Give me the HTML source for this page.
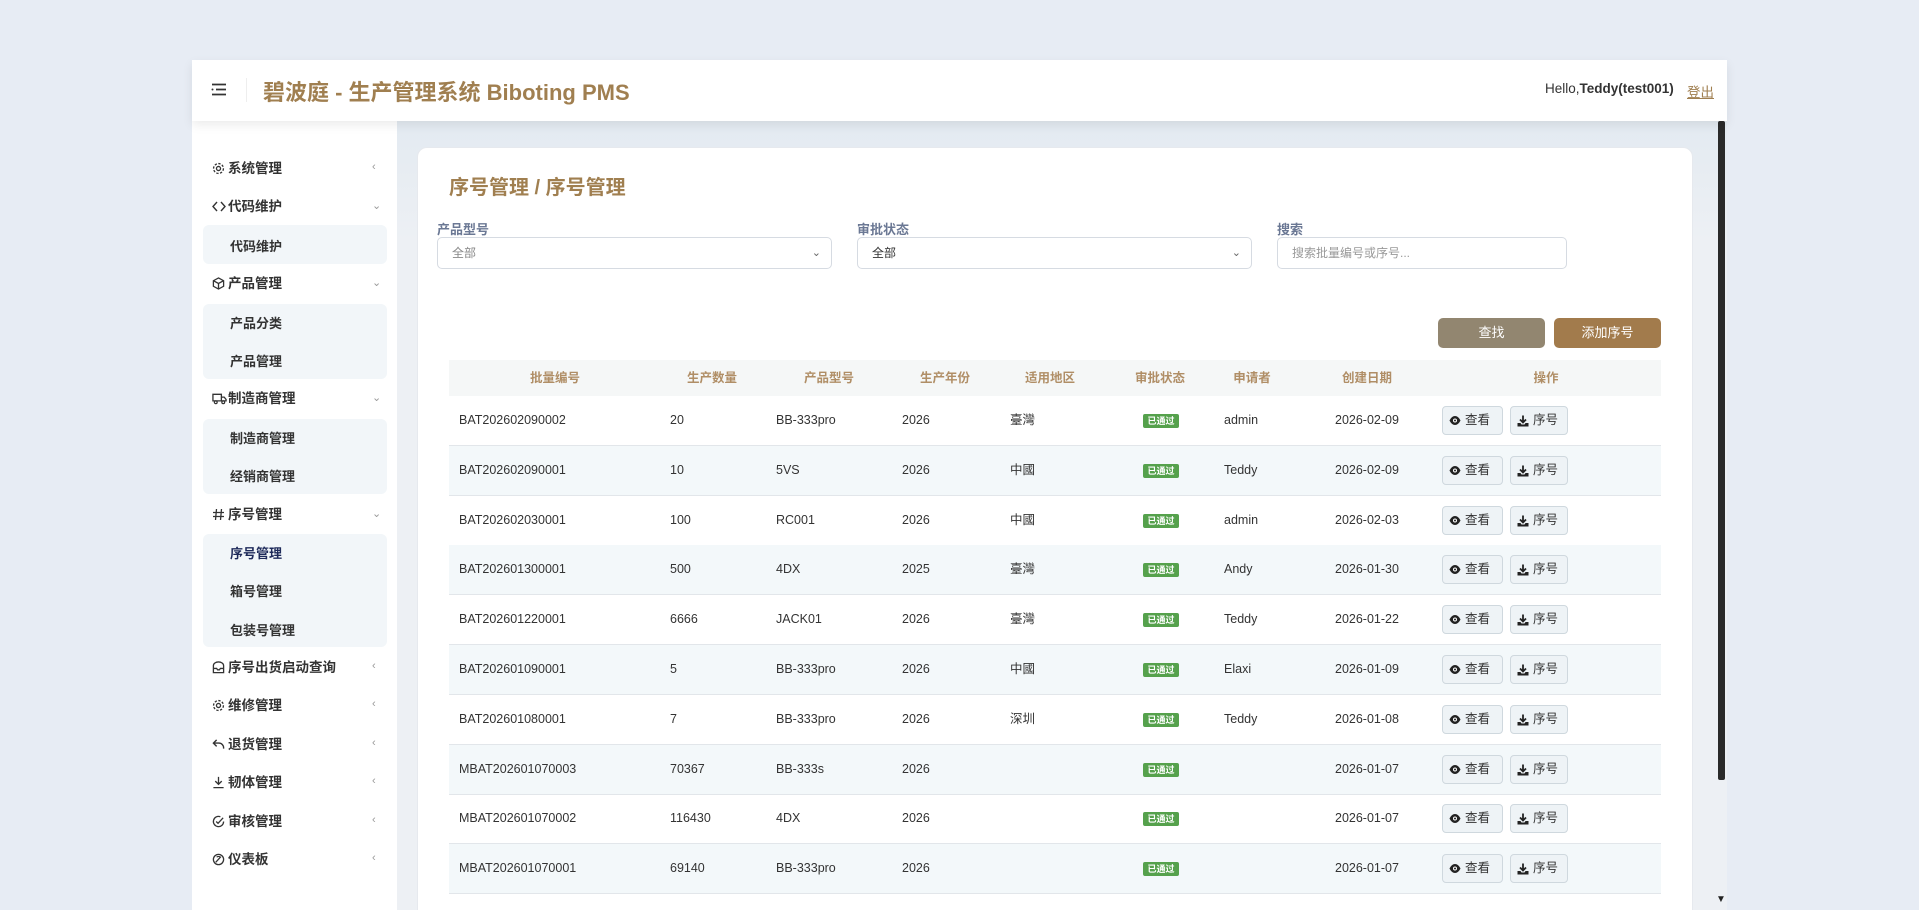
<!DOCTYPE html>
<html><head><meta charset="utf-8"><style>
*{box-sizing:border-box;margin:0;padding:0}
html,body{width:1919px;height:910px;overflow:hidden}
body{background:#e7ecf4;font-family:"Liberation Sans","Noto Sans CJK SC",sans-serif;position:relative}
.abs{position:absolute}
.hdr{left:192px;top:60px;width:1535px;height:61px;background:#fff;box-shadow:0 4px 10px rgba(0,0,0,.08);z-index:3}
.side{left:192px;top:121px;width:205px;height:789px;background:#fff}
.main{left:397px;top:121px;width:1330px;height:789px;background:linear-gradient(180deg,#e3eaf1,#edf0f4 120px)}
.sb{left:1718px;top:121px;width:7px;height:659px;background:#2a2a2a;border-radius:2px}
.card{left:417px;top:147px;width:1276px;height:763px;background:#fff;border-radius:10px 10px 0 0;border:1px solid #e6e9ee;border-bottom:none}
.mi{position:absolute;left:212px;font-size:13.5px;color:#333;font-weight:bold;height:20px;line-height:20px}
.mi svg{position:absolute;left:0;top:3px}
.mi span{position:absolute;left:16px;white-space:nowrap}
.ch{position:absolute;left:372px;font-size:11px;color:#999}
.box{position:absolute;left:203px;width:184px;background:#f2f6f9;border-radius:6px}
.si{position:absolute;left:230px;font-size:13px;color:#333;font-weight:bold}
.lbl{font-size:13px;color:#6b7894;font-weight:bold;top:219px}
.sel{top:237px;height:32px;border:1px solid #d6dbe2;border-radius:5px;background:#fff;font-size:12px;color:#888;padding:0 14px;line-height:30px}
.sel i{position:absolute;right:10px;top:0;font-style:normal;color:#666;font-size:11px}
.btn{top:318px;height:30px;border-radius:5px;color:#fff;font-size:13px;text-align:center;line-height:30px}
.th{top:360px;left:449px;width:1212px;height:36px;background:#f5f7f7}
.h{position:absolute;top:0;line-height:36px;font-size:12.5px;color:#b08e66;font-weight:bold;transform:translateX(-50%);white-space:nowrap}
.row{position:absolute;left:449px;width:1212px;height:50px;border-bottom:1px solid #e2e6ea;font-size:12.5px;color:#333}
.row.alt{background:#f3f8fa}
.row span{position:absolute;top:0;line-height:49px;white-space:nowrap}
.bd{position:absolute;top:18px;left:694px;width:36px;height:14px;background:#55a14c;color:#fff;font-size:9px;line-height:14px;text-align:center;border-radius:2px;font-weight:bold}
.ob{position:absolute;top:10px;height:29px;border:1px solid #cfd8de;background:#eef3f6;border-radius:4px;font-size:12.5px;color:#333;line-height:27px;padding-left:22px}
.ob svg{position:absolute;left:6px;top:8px}
</style></head><body>
<div class="abs main"></div>
<div class="abs side"></div>
<div class="abs sb"></div>
<div class="abs" style="left:1716px;top:894px;font-size:10px;color:#222">▼</div>
<div class="abs hdr">
 <svg class="abs" style="left:19px;top:23px" width="16" height="13" viewBox="0 0 16 13"><path d="M1 1.5h14M5 6.5h10M1 11.5h14" stroke="#333" stroke-width="1.8"/><circle cx="1.5" cy="6.5" r="1" fill="#333"/></svg>
 <div class="abs" style="left:54px;top:18px;width:1px;height:24px;background:#eee"></div>
 <div class="abs" style="left:71px;top:15px;font-size:22px;font-weight:bold;color:#a07f50;white-space:nowrap">碧波庭 - 生产管理系统 Biboting PMS</div>
 <div class="abs" style="left:1353px;top:21px;font-size:13.5px;color:#333;white-space:nowrap">Hello,<b>Teddy(test001)</b></div>
 <div class="abs" style="left:1495px;top:21px;font-size:13.5px;color:#a07f50;text-decoration:underline">登出</div>
</div>

<div class="mi" style="top:159px"><svg width="13" height="13" viewBox="0 0 14 14"><circle cx="7" cy="7" r="2.2" fill="none" stroke="#333" stroke-width="1.4"/><circle cx="7" cy="7" r="5.3" fill="none" stroke="#333" stroke-width="1.4" stroke-dasharray="2.5 1.6"/></svg><span>系统管理</span></div><div class="ch" style="top:161px">‹</div>
<div class="mi" style="top:197px"><svg width="14" height="13" viewBox="0 0 14 13"><path d="M5 2L1 6.5 5 11M9 2l4 4.5L9 11" fill="none" stroke="#333" stroke-width="1.4"/></svg><span>代码维护</span></div><div class="ch" style="top:199px">⌄</div>
<div class="box" style="top:225px;height:39px"></div><div class="si" style="top:236px">代码维护</div>
<div class="mi" style="top:274px"><svg width="13" height="13" viewBox="0 0 14 14"><path d="M7 1l5.5 3v6L7 13 1.5 10V4z M1.5 4L7 7l5.5-3M7 7v6" fill="none" stroke="#333" stroke-width="1.4"/></svg><span>产品管理</span></div><div class="ch" style="top:276px">⌄</div>
<div class="box" style="top:304px;height:75px"></div><div class="si" style="top:313px">产品分类</div><div class="si" style="top:351px">产品管理</div>
<div class="mi" style="top:389px"><svg width="15" height="13" viewBox="0 0 16 13"><path d="M1 2h9v7H1zM10 5h3l2 2.5V9h-5" fill="none" stroke="#333" stroke-width="1.4"/><circle cx="4" cy="10.5" r="1.5" fill="#fff" stroke="#333" stroke-width="1.3"/><circle cx="12" cy="10.5" r="1.5" fill="#fff" stroke="#333" stroke-width="1.3"/></svg><span>制造商管理</span></div><div class="ch" style="top:391px">⌄</div>
<div class="box" style="top:419px;height:75px"></div><div class="si" style="top:428px">制造商管理</div><div class="si" style="top:466px">经销商管理</div>
<div class="mi" style="top:505px"><svg width="13" height="13" viewBox="0 0 13 13"><path d="M4.5 1L3.5 12M9.5 1l-1 11M1 4.5h11M1 8.5h11" stroke="#333" stroke-width="1.3"/></svg><span>序号管理</span></div><div class="ch" style="top:507px">⌄</div>
<div class="box" style="top:534px;height:113px"></div><div class="si" style="top:543px;color:#1e2a5a">序号管理</div><div class="si" style="top:581px">箱号管理</div><div class="si" style="top:620px">包装号管理</div>
<div class="mi" style="top:658px"><svg width="13" height="13" viewBox="0 0 14 14"><path d="M1.5 8V5a5.5 4 0 0 1 11 0v3M1.5 8h3.5l1 1.5h2l1-1.5h3.5v4.5h-11z" fill="none" stroke="#333" stroke-width="1.4"/></svg><span>序号出货启动查询</span></div><div class="ch" style="top:660px">‹</div>
<div class="mi" style="top:696px"><svg width="13" height="13" viewBox="0 0 14 14"><circle cx="7" cy="7" r="2.2" fill="none" stroke="#333" stroke-width="1.4"/><circle cx="7" cy="7" r="5.3" fill="none" stroke="#333" stroke-width="1.4" stroke-dasharray="2.5 1.6"/></svg><span>维修管理</span></div><div class="ch" style="top:698px">‹</div>
<div class="mi" style="top:735px"><svg width="13" height="13" viewBox="0 0 14 14"><path d="M5 2L1.5 5.5 5 9M1.5 5.5h6a5 5 0 0 1 5 5v1" fill="none" stroke="#333" stroke-width="1.5"/></svg><span>退货管理</span></div><div class="ch" style="top:737px">‹</div>
<div class="mi" style="top:773px"><svg width="13" height="13" viewBox="0 0 14 14"><path d="M7 1v8M3.5 5.5L7 9l3.5-3.5M1.5 12.5h11" fill="none" stroke="#333" stroke-width="1.4"/></svg><span>韧体管理</span></div><div class="ch" style="top:775px">‹</div>
<div class="mi" style="top:812px"><svg width="13" height="13" viewBox="0 0 14 14"><path d="M12.5 7A5.5 5.5 0 1 1 9 1.9M4.5 7l2 2L12 3" fill="none" stroke="#333" stroke-width="1.4"/></svg><span>审核管理</span></div><div class="ch" style="top:814px">‹</div>
<div class="mi" style="top:850px"><svg width="13" height="13" viewBox="0 0 14 14"><circle cx="7" cy="7" r="5.5" fill="none" stroke="#333" stroke-width="1.4"/><path d="M4 10L9.5 4M5 4.5a3 3 0 0 1 4 0" fill="none" stroke="#333" stroke-width="1.4"/></svg><span>仪表板</span></div><div class="ch" style="top:852px">‹</div>

<div class="abs card"></div>
<div class="abs" style="left:449px;top:171px;font-size:20px;font-weight:bold;color:#a07f50">序号管理 / 序号管理</div>
<div class="abs lbl" style="left:437px">产品型号</div>
<div class="abs lbl" style="left:857px">审批状态</div>
<div class="abs lbl" style="left:1277px">搜索</div>
<div class="abs sel" style="left:437px;width:395px">全部<i>⌄</i></div>
<div class="abs sel" style="left:857px;width:395px;color:#333">全部<i>⌄</i></div>
<div class="abs sel" style="left:1277px;width:290px;color:#999">搜索批量编号或序号...</div>
<div class="abs btn" style="left:1438px;width:107px;background:#928670">查找</div>
<div class="abs btn" style="left:1554px;width:107px;background:#a27b4c">添加序号</div>

<div class="abs th">
<span class="h" style="left:106px">批量编号</span><span class="h" style="left:263px">生产数量</span><span class="h" style="left:380px">产品型号</span><span class="h" style="left:496px">生产年份</span><span class="h" style="left:601px">适用地区</span><span class="h" style="left:711px">审批状态</span><span class="h" style="left:803px">申请者</span><span class="h" style="left:918px">创建日期</span><span class="h" style="left:1097px">操作</span>
</div>

<div id="rows"></div>
<script>
var d=[["BAT202602090002","20","BB-333pro","2026","臺灣","admin","2026-02-09"],
["BAT202602090001","10","5VS","2026","中國","Teddy","2026-02-09"],
["BAT202602030001","100","RC001","2026","中國","admin","2026-02-03"],
["BAT202601300001","500","4DX","2025","臺灣","Andy","2026-01-30"],
["BAT202601220001","6666","JACK01","2026","臺灣","Teddy","2026-01-22"],
["BAT202601090001","5","BB-333pro","2026","中國","Elaxi","2026-01-09"],
["BAT202601080001","7","BB-333pro","2026","深圳","Teddy","2026-01-08"],
["MBAT202601070003","70367","BB-333s","2026","","","2026-01-07"],
["MBAT202601070002","116430","4DX","2026","","","2026-01-07"],
["MBAT202601070001","69140","BB-333pro","2026","","","2026-01-07"]];
var L=[10,221,327,453,561,775,886],h="";
var eye='<svg width="12" height="11" viewBox="0 0 12 11"><path d="M0.5 5.5C2 2.5 4 1 6 1s4 1.5 5.5 4.5C10 8.5 8 10 6 10S2 8.5 0.5 5.5z" fill="#222"/><circle cx="6" cy="5.5" r="2" fill="#fff"/><circle cx="6" cy="5.5" r="1" fill="#222"/></svg>';
var dl='<svg width="12" height="12" viewBox="0 0 12 12"><path d="M6 0.5v6.5M3 4.5L6 7.5l3-3" fill="none" stroke="#222" stroke-width="1.8"/><path d="M0.5 8h3l1 1.5h3l1-1.5h3v3.5h-11z" fill="#222"/></svg>';
d.forEach(function(r,i){h+='<div class="row'+(i%2?' alt':'')+'" style="top:'+(396+i*49.8)+'px">';
[0,1,2,3,4].forEach(function(k){h+='<span style="left:'+L[k]+'px">'+r[k]+'</span>'});
h+='<div class="bd">已通过</div><span style="left:775px">'+r[5]+'</span><span style="left:886px">'+r[6]+'</span>';
h+='<div class="ob" style="left:993px;width:61px">'+eye+'查看</div><div class="ob" style="left:1061px;width:58px">'+dl+'序号</div></div>';});
document.getElementById('rows').innerHTML=h;
</script>
</body></html>
